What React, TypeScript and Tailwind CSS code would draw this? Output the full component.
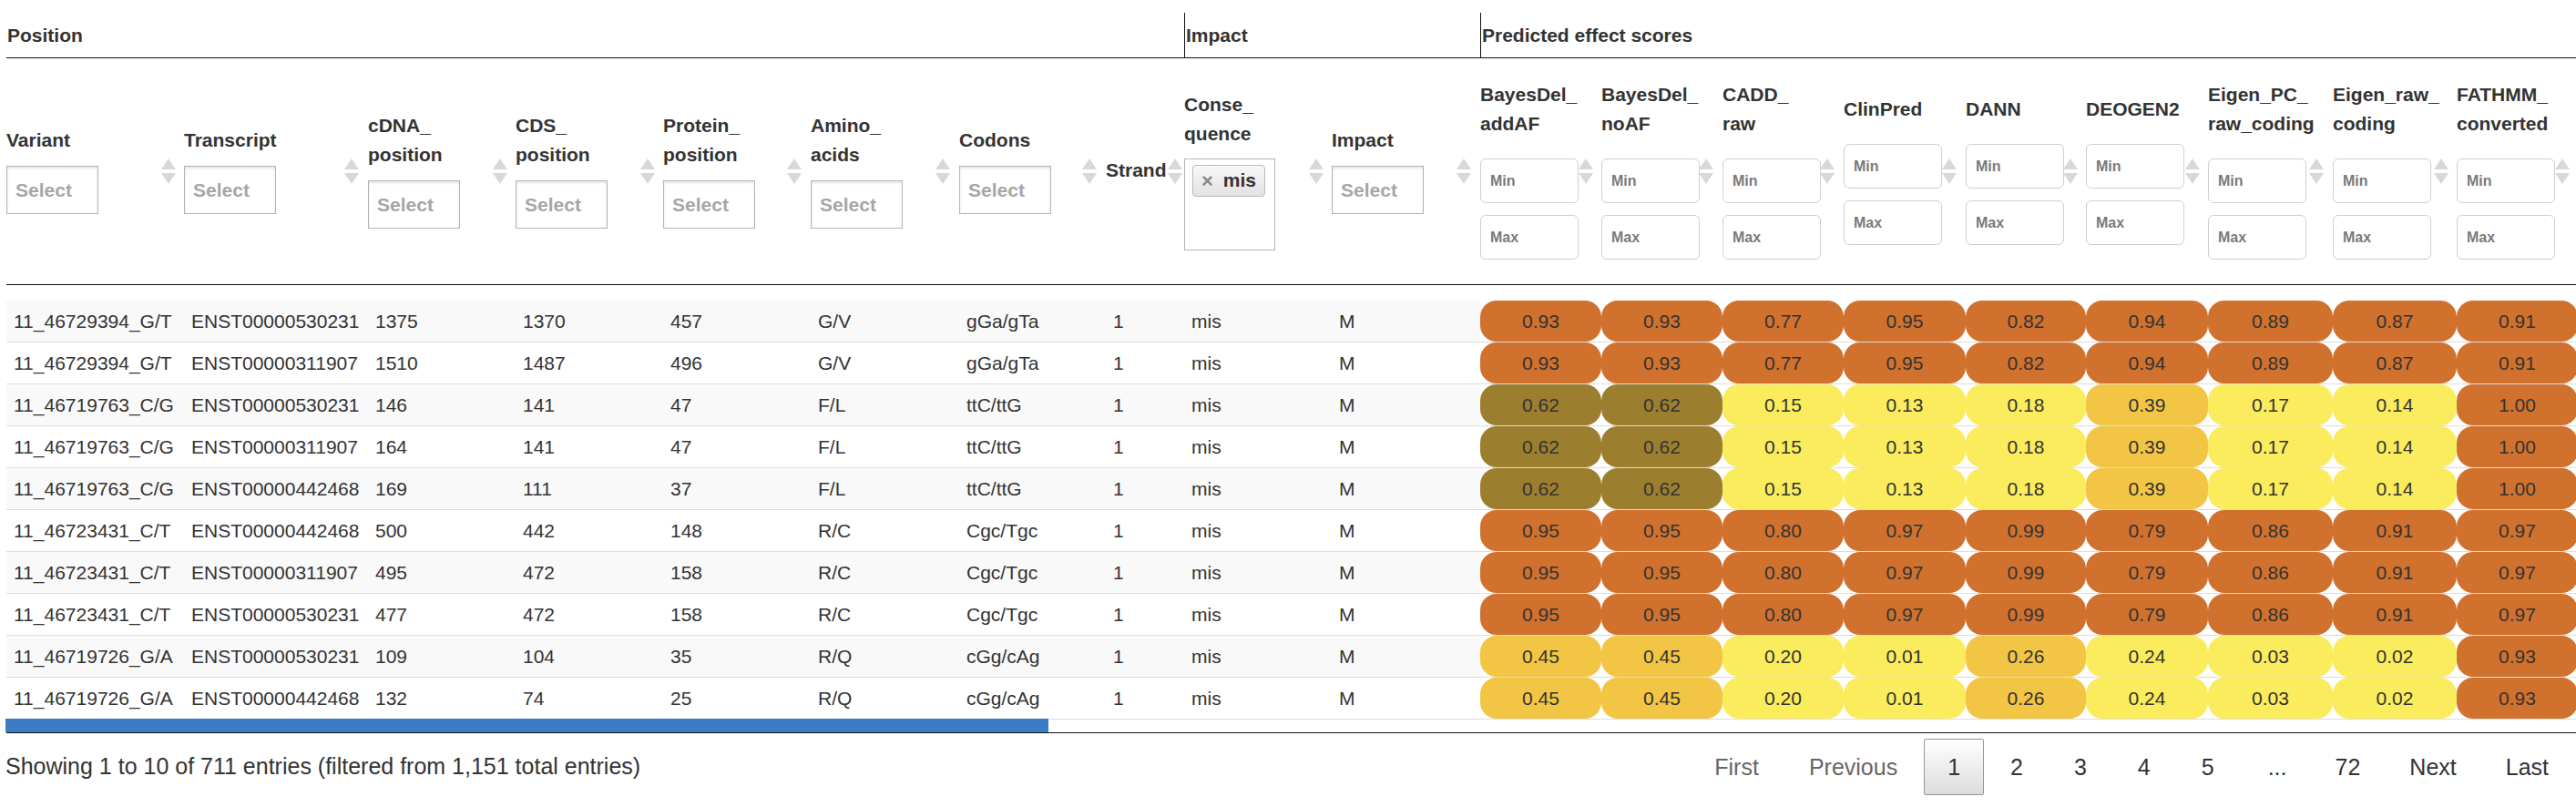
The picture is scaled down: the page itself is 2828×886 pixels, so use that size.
import React from "react";

type Filter = "select" | "range" | "tag" | "none";

interface Col {
  label: string[];
  w: string;
  filter: Filter;
  sortPos: string;
}

const COLS: Col[] = [
  { label: ["Variant"], w: "w-[195px]", filter: "select", sortPos: "right-[9px]" },
  { label: ["Transcript"], w: "w-[202px]", filter: "select", sortPos: "right-[10px]" },
  { label: ["cDNA_", "position"], w: "w-[162px]", filter: "select", sortPos: "right-[9px]" },
  { label: ["CDS_", "position"], w: "w-[162px]", filter: "select", sortPos: "right-[9px]" },
  { label: ["Protein_", "position"], w: "w-[162px]", filter: "select", sortPos: "right-[10px]" },
  { label: ["Amino_", "acids"], w: "w-[163px]", filter: "select", sortPos: "right-[10px]" },
  { label: ["Codons"], w: "w-[161px]", filter: "select", sortPos: "right-[10px]" },
  { label: ["Strand"], w: "w-[86px]", filter: "none", sortPos: "right-[2px]" },
  { label: ["Conse_", "quence"], w: "w-[162px]", filter: "tag", sortPos: "right-[9px]" },
  { label: ["Impact"], w: "w-[163px]", filter: "select", sortPos: "right-[10px]" },
  { label: ["BayesDel_", "addAF"], w: "w-[133px]", filter: "range", sortPos: "right-[9px]" },
  { label: ["BayesDel_", "noAF"], w: "w-[133px]", filter: "range", sortPos: "right-[10px]" },
  { label: ["CADD_", "raw"], w: "w-[133px]", filter: "range", sortPos: "right-[10px]" },
  { label: ["ClinPred"], w: "w-[134px]", filter: "range", sortPos: "right-[10px]" },
  { label: ["DANN"], w: "w-[132px]", filter: "range", sortPos: "right-[9px]" },
  { label: ["DEOGEN2"], w: "w-[134px]", filter: "range", sortPos: "right-[9px]" },
  { label: ["Eigen_PC_", "raw_coding"], w: "w-[137px]", filter: "range", sortPos: "right-[10px]" },
  { label: ["Eigen_raw_", "coding"], w: "w-[136px]", filter: "range", sortPos: "right-[9px]" },
  { label: ["FATHMM_", "converted"], w: "w-[133px]", filter: "range", sortPos: "right-[9px]" },
];

const PILL: Record<string, string> = {
  o: "bg-[#d0712e]",
  v: "bg-[#9c7e2f]",
  y: "bg-[#fbec5d]",
  m: "bg-[#f3c544]",
};

type Score = [string, string];

const HIGH_A: Score[] = [["0.93", "o"], ["0.93", "o"], ["0.77", "o"], ["0.95", "o"], ["0.82", "o"], ["0.94", "o"], ["0.89", "o"], ["0.87", "o"], ["0.91", "o"]];
const LOW_B: Score[] = [["0.62", "v"], ["0.62", "v"], ["0.15", "y"], ["0.13", "y"], ["0.18", "y"], ["0.39", "m"], ["0.17", "y"], ["0.14", "y"], ["1.00", "o"]];
const HIGH_C: Score[] = [["0.95", "o"], ["0.95", "o"], ["0.80", "o"], ["0.97", "o"], ["0.99", "o"], ["0.79", "o"], ["0.86", "o"], ["0.91", "o"], ["0.97", "o"]];
const LOW_D: Score[] = [["0.45", "m"], ["0.45", "m"], ["0.20", "y"], ["0.01", "y"], ["0.26", "m"], ["0.24", "y"], ["0.03", "y"], ["0.02", "y"], ["0.93", "o"]];

const ROWS: { cells: string[]; scores: Score[] }[] = [
  { cells: ["11_46729394_G/T", "ENST00000530231", "1375", "1370", "457", "G/V", "gGa/gTa", "1", "mis", "M"], scores: HIGH_A },
  { cells: ["11_46729394_G/T", "ENST00000311907", "1510", "1487", "496", "G/V", "gGa/gTa", "1", "mis", "M"], scores: HIGH_A },
  { cells: ["11_46719763_C/G", "ENST00000530231", "146", "141", "47", "F/L", "ttC/ttG", "1", "mis", "M"], scores: LOW_B },
  { cells: ["11_46719763_C/G", "ENST00000311907", "164", "141", "47", "F/L", "ttC/ttG", "1", "mis", "M"], scores: LOW_B },
  { cells: ["11_46719763_C/G", "ENST00000442468", "169", "111", "37", "F/L", "ttC/ttG", "1", "mis", "M"], scores: LOW_B },
  { cells: ["11_46723431_C/T", "ENST00000442468", "500", "442", "148", "R/C", "Cgc/Tgc", "1", "mis", "M"], scores: HIGH_C },
  { cells: ["11_46723431_C/T", "ENST00000311907", "495", "472", "158", "R/C", "Cgc/Tgc", "1", "mis", "M"], scores: HIGH_C },
  { cells: ["11_46723431_C/T", "ENST00000530231", "477", "472", "158", "R/C", "Cgc/Tgc", "1", "mis", "M"], scores: HIGH_C },
  { cells: ["11_46719726_G/A", "ENST00000530231", "109", "104", "35", "R/Q", "cGg/cAg", "1", "mis", "M"], scores: LOW_D },
  { cells: ["11_46719726_G/A", "ENST00000442468", "132", "74", "25", "R/Q", "cGg/cAg", "1", "mis", "M"], scores: LOW_D },
];

function SortIcon({ className }: { className: string }) {
  return (
    <svg width="16" height="28" viewBox="0 0 16 28" className={className}>
      <path d="M8 0 L16 12 L0 12 Z" fill="#d8d8d8" />
      <path d="M0 16 L16 16 L8 28 Z" fill="#d8d8d8" />
    </svg>
  );
}

function ColumnFilter({ type }: { type: Filter }) {
  if (type === "select")
    return (
      <div className="mt-[12px] flex h-[53px] w-[101px] items-center border border-[#b4b4b4] bg-white pl-[9px] font-bold text-[#a6a6a6] shadow-[inset_0_2px_3px_rgba(0,0,0,0.1)]">
        Select
      </div>
    );
  if (type === "range")
    return (
      <div className="mt-[22px] flex flex-col gap-[13px]">
        {["Min", "Max"].map((p) => (
          <div
            key={p}
            className="flex h-[49px] w-[108px] items-center rounded-[6px] border border-[#cfcfcf] bg-white pl-[10px] text-[16px] font-bold text-[#7a7a7a]"
          >
            {p}
          </div>
        ))}
      </div>
    );
  if (type === "tag")
    return (
      <div className="mt-[11px] h-[101px] w-[100px] border border-[#b4b4b4] bg-white pl-[8px] pt-[6px]">
        <span className="inline-flex h-[35px] items-center gap-[11px] rounded-[4px] border border-[#b9b9b9] bg-linear-to-b from-[#f8f8f8] to-[#e2e2e2] px-[9px] font-bold">
          <span className="text-[22px] text-[#8a8a8a]">×</span>
          <span>mis</span>
        </span>
      </div>
    );
  return null;
}

export default function App() {
  return (
    <div className="w-full overflow-hidden bg-white font-['Liberation_Sans',Arial,sans-serif] text-[21px] text-[#333]">
      <div className="w-[2836px] pt-[14px]">
        {/* group headers */}
        <div className="ml-[7px] flex h-[50px] border-b border-[#111] font-bold">
          <div className="flex w-[1293px] items-center pl-[1px]">Position</div>
          <div className="flex w-[325px] items-center border-l border-[#111] pl-[1px]">Impact</div>
          <div className="flex flex-1 items-center border-l border-[#111] pl-[1px]">Predicted effect scores</div>
        </div>

        {/* column headers */}
        <div className="ml-[7px] flex h-[249px] border-b border-[#111]">
          {COLS.map((c) => (
            <div key={c.label.join("")} className={`relative flex h-full shrink-0 flex-col justify-center pb-[3px] ${c.w}`}>
              <div className="whitespace-nowrap font-bold leading-[32px]">
                {c.label.map((l) => (
                  <div key={l}>{l}</div>
                ))}
              </div>
              <ColumnFilter type={c.filter} />
              <SortIcon className={`absolute top-1/2 -translate-y-1/2 ${c.sortPos}`} />
            </div>
          ))}
        </div>

        <div className="h-[17px]" />

        {/* body */}
        <div className="ml-[7px]">
          {ROWS.map((r, i) => (
            <div key={i} className="flex h-[46px] border-b border-[#ddd]">
              {r.cells.map((v, j) => (
                <div
                  key={j}
                  className={`flex shrink-0 items-center whitespace-nowrap pl-[8px] ${COLS[j].w} ${i % 2 === 0 ? "bg-[#f9f9f9]" : "bg-white"}`}
                >
                  {v}
                </div>
              ))}
              {r.scores.map(([v, c], k) => (
                <div
                  key={k}
                  className={`flex h-full shrink-0 items-center justify-center rounded-[18px] ${COLS[k + 10].w} ${PILL[c]}`}
                >
                  {v}
                </div>
              ))}
            </div>
          ))}
        </div>

        {/* scroll bar + bottom rule */}
        <div className="ml-[6px] -mt-px h-[15px] w-[1145px] bg-[#3b7dc4]" />
        <div className="ml-[7px] border-t border-[#111]" />

        {/* footer */}
        <div className="mt-[6px] flex h-[62px] items-center justify-between pl-[6px] pr-[12px] text-[25px]">
          <div>Showing 1 to 10 of 711 entries (filtered from 1,151 total entries)</div>
          <div className="flex items-center leading-[36px]">
            <span className="ml-[2px] border border-transparent px-[25px] py-[12px] text-[#666]">First</span>
            <span className="ml-[2px] border border-transparent px-[26px] py-[12px] text-[#666]">Previous</span>
            <span className="ml-[2px] rounded-[2px] border border-[#979797] bg-linear-to-b from-white to-[#dcdcdc] px-[25px] py-[12px]">1</span>
            {["2", "3", "4", "5"].map((n) => (
              <span key={n} className="ml-[2px] border border-transparent px-[26px] py-[12px]">
                {n}
              </span>
            ))}
            <span className="pl-[32px] pr-[25px]">...</span>
            <span className="ml-[2px] border border-transparent px-[25px] py-[12px]">72</span>
            <span className="ml-[2px] border border-transparent px-[25px] py-[12px]">Next</span>
            <span className="ml-[2px] border border-transparent px-[25px] py-[12px]">Last</span>
          </div>
        </div>
      </div>
    </div>
  );
}
